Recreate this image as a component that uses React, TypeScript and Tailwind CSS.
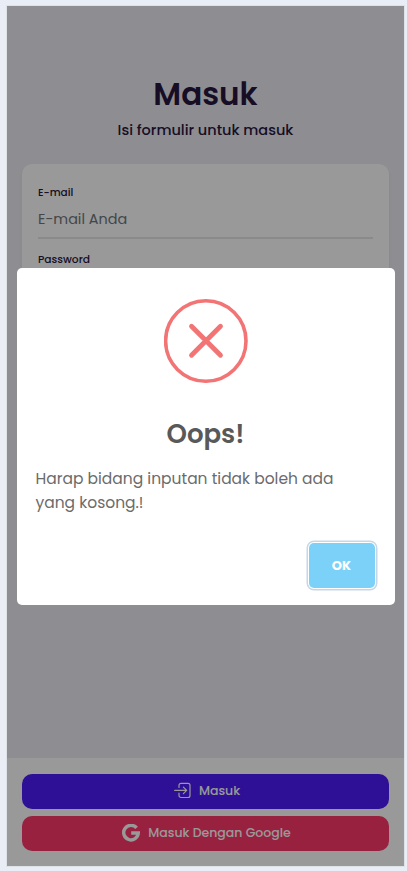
import type { ReactNode } from "react";

function LoginIcon() {
  return (
    <svg className="-mt-px" width="17" height="17" viewBox="0 0 17 17" fill="none" stroke="currentColor" strokeWidth="1.2" strokeLinecap="round" strokeLinejoin="round">
      <path d="M5 5.500V3.300a2 2 0 0 1 2-2h7a2 2 0 0 1 2 2v10.200a2 2 0 0 1-2 2H7a2 2 0 0 1-2-2V11.200" />
      <path d="M.7 8.400H12.500M9.400 5.100l3.300 3.300-3.300 3.300" />
    </svg>
  );
}

function GoogleIcon() {
  return (
    <svg className="-mt-px" width="18" height="18" viewBox="0 0 18 18" fill="none" stroke="currentColor" strokeWidth="3.400">
      <path d="M14.600 3.900A7.300 7.300 0 1 0 16.300 9H9.200" />
    </svg>
  );
}

function Action({ className, children }: { className: string; children: ReactNode }) {
  return (
    <button className={`flex h-[35px] w-full items-center justify-center rounded-[10px] pb-px text-[12.5px] font-medium text-white ${className}`}>
      {children}
    </button>
  );
}

export default function App() {
  return (
    <div className="h-[871px] w-[407px] bg-[#e9eef6] pt-1.5 pl-[7px] font-['Poppins','Inter',sans-serif]">
      <div className="relative flex h-[860px] w-[397px] flex-col overflow-hidden bg-[#edecf4] shadow-[0_0_0_1px_#dde2e6]">
        <header className="pt-[67px] text-center text-[#27173e]">
          <h1 className="text-[31px] leading-[42px] font-semibold">Masuk</h1>
          <p className="mt-1 text-[14.5px] leading-[22px] font-medium">Isi formulir untuk masuk</p>
        </header>

        <main className="flex-1 px-[15px] pt-[23px]">
          <div className="h-[180px] rounded-[10px] bg-white px-4 pt-[21px] shadow-[0_3px_6px_0_rgba(0,0,0,0.05)]">
            <label className="block text-[10.5px] leading-4 font-medium text-[#27173e]">E-mail</label>
            <div className="flex h-[38px] items-center border-b-2 border-[#e6e6e8] pt-0.5 text-[14.4px] text-[#70777c]">E-mail Anda</div>
            <label className="mt-[13px] block text-[10.7px] leading-4 font-medium text-[#27173e]">Password</label>
          </div>
        </main>

        <footer className="flex h-[108px] flex-col gap-[7px] bg-white px-[15px] pt-4">
          <Action className="gap-2 bg-[#4e1bfa] pl-[3px]"><LoginIcon /><span>Masuk</span></Action>
          <Action className="gap-2 bg-[#ff376c] pl-0.5"><GoogleIcon /><span>Masuk Dengan Google</span></Action>
        </footer>

        <div className="absolute inset-0 flex items-center justify-center bg-black/40 pt-px">
          <div role="dialog" className="h-[337px] w-[378px] rounded-[5px] bg-white">
            <div className="flex justify-center pt-[31px]">
              <svg width="84" height="84" viewBox="0 0 84 84" fill="none" stroke="#f27474">
                <circle cx="41.800" cy="42" r="40.200" strokeWidth="3.600" />
                <path d="M27.500 27.200l29 29M56.500 27.200l-29 29" strokeWidth="4.800" strokeLinecap="round" />
              </svg>
            </div>
            <h2 className="mt-[33px] text-center text-[26px] leading-9 font-semibold text-[#595959]">Oops!</h2>
            <p className="mt-[15px] pl-[19px] text-[15.5px] leading-6 whitespace-nowrap text-[#6b6b6b]">
              Harap bidang inputan tidak boleh ada<br />yang kosong.!
            </p>
            <div className="mt-[28px] flex justify-end pr-5">
              <button className="h-[45px] w-[66px] rounded-[5px] bg-[#7cd1f9] text-[13px] font-bold text-white shadow-[0_0_0_1px_#fff,0_0_0_2.5px_#c6d7e6]">OK</button>
            </div>
          </div>
        </div>
      </div>
    </div>
  );
}
